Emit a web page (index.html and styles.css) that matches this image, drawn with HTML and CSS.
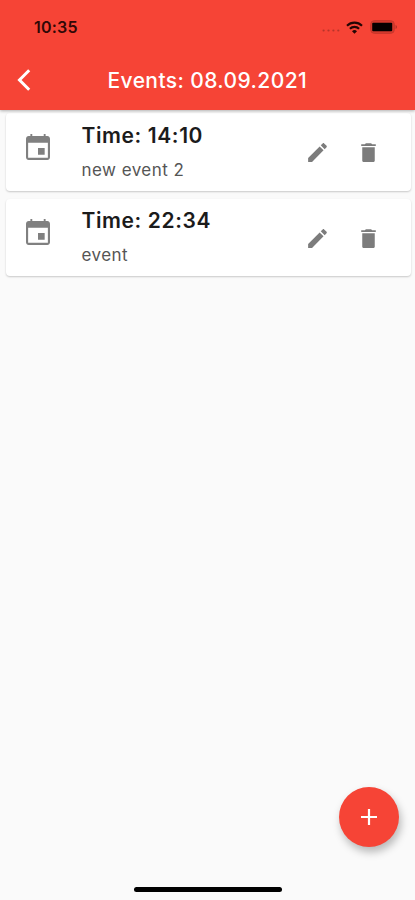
FILE: index.html
```html
<!DOCTYPE html>
<html lang="en">
<head>
<meta charset="utf-8">
<title>Events</title>
<link rel="stylesheet" href="styles.css">
</head>
<body>
<svg width="0" height="0" class="defs">
  <symbol id="calendar" viewBox="0 0 24 24"><path d="M17 12h-5v5h5v-5zM16.300 1.500v1.500H7.700V1.500H6.300V3H5c-1.110 0-1.990.9-1.990 2L3 19c0 1.100.89 2 2 2h14c1.100 0 2-.9 2-2V5c0-1.100-.9-2-2-2h-1.300V1.500h-1.400zM19.400 19.400H4.600V8h14.800v11.400z"/></symbol>
  <symbol id="edit" viewBox="0 0 24 24"><path d="M3 17.250V21h3.750L17.810 9.940l-3.750-3.750L3 17.250zM20.710 7.040c.39-.39.39-1.020 0-1.410l-2.340-2.340c-.39-.39-1.020-.39-1.410 0l-1.830 1.830 3.750 3.750 1.830-1.830z"/></symbol>
  <symbol id="trash" viewBox="0 0 24 24"><path d="M6 20q0 1 1 1h10q1 0 1-1V7H6v13zM19 4h-3.500l-1-1h-5l-1 1H5v1.700h14V4z"/></symbol>
</svg>
<div class="screen">
  <header class="appbar">
    <div class="status">
      <span class="clock">10:35</span>
      <div class="indicators">
        <svg class="dots" width="18" height="3" viewBox="0 0 18 3"><g fill="#b5342a"><circle cx="1.600" cy="1.500" r="1.100"/><circle cx="6.500" cy="1.500" r="1.100"/><circle cx="11.400" cy="1.500" r="1.100"/><circle cx="16.300" cy="1.500" r="1.100"/></g></svg>
        <svg class="wifi" width="17" height="13" viewBox="0 0 17 13"><g fill="none" stroke="#240604" stroke-width="2.100"><path d="M1 4.700a10.700 10.700 0 0 1 15 0"/><path d="M3.900 7.700a6.600 6.600 0 0 1 9.200 0"/></g><path fill="#240604" d="M8.500 12.700 6 10.200a3.600 3.600 0 0 1 5 0z"/></svg>
        <svg class="battery" width="27" height="14" viewBox="0 0 27 14"><rect x=".6" y=".6" width="23.800" height="12.800" rx="4" fill="#d53a2e" stroke="#c8372c"/><rect x="2.200" y="2.800" width="20" height="8.400" rx="1" fill="#050000"/><path d="M25.600 5q1.300 .6 1.300 2t-1.300 2z" fill="#a92d25"/></svg>
      </div>
    </div>
    <div class="toolbar">
      <svg class="back" width="14" height="22" viewBox="0 0 14 22"><path d="M12.200 1.300 2.500 11l9.700 9.700" fill="none" stroke="#fff" stroke-width="3"/></svg>
      <h1>Events: 08.09.2021</h1>
    </div>
  </header>
  <main class="list">
    <article class="card">
      <svg class="calendar"><use href="#calendar"/></svg>
      <div class="text"><h2>Time: 14:10</h2><p>new event 2</p></div>
      <svg class="action"><use href="#edit"/></svg>
      <svg class="action"><use href="#trash"/></svg>
    </article>
    <article class="card">
      <svg class="calendar"><use href="#calendar"/></svg>
      <div class="text"><h2>Time: 22:34</h2><p>event</p></div>
      <svg class="action"><use href="#edit"/></svg>
      <svg class="action"><use href="#trash"/></svg>
    </article>
  </main>
  <button class="fab" aria-label="Add event"><svg width="16" height="16" viewBox="0 0 16 16"><path d="M8 0v16M0 8h16" stroke="#fff" stroke-width="2.200"/></svg></button>
  <div class="home"></div>
</div>
</body>
</html>
```
FILE: styles.css
```css
* { box-sizing: border-box; }
body { margin: 0; background: #fafafa; font-family: Inter, "Liberation Sans", sans-serif; }
h1, h2, p { margin: 0; white-space: nowrap; }
.defs { position: absolute; }
.screen { position: relative; width: 415px; height: 900px; overflow: hidden; background: #fafafa; }
.appbar { position: relative; z-index: 1; height: 109.5px; background: #f64436; box-shadow: 0 1px 3px rgba(0,0,0,.3); }
.status { display: flex; justify-content: space-between; height: 51px; padding: 17px 18px 0 34px; }
.clock { font-size: 16px; line-height: 20px; font-weight: 600; letter-spacing: .2px; color: #300806; }
.indicators { display: flex; height: 20px; align-items: center; }
.dots { margin: 7px 6px 0 0; }
.wifi { margin-right: 7px; }
.toolbar { display: flex; height: 58px; align-items: center; padding-left: 17px; }
.back { flex: none; }
h1 { margin: 2px 0 0 76.5px; font-size: 21px; line-height: 28px; font-weight: 500; letter-spacing: .4px; color: #fff; }
.list { display: flex; flex-direction: column; gap: 8px; padding: 3.5px 4.5px 0 6px; }
.card { display: flex; height: 77.5px; padding-right: 30px; background: #fff; border-radius: 4px; box-shadow: 0 1px 2px rgba(0,0,0,.2); }
.calendar { flex: none; width: 32px; height: 32px; margin: 18.5px 28px 0 15.5px; fill: #808080; }
.text { flex: 1; padding-top: 9.5px; }
h2 { font-size: 21px; line-height: 26px; font-weight: 600; letter-spacing: .6px; color: #1b1b1b; }
p { margin-top: 10px; font-size: 17px; line-height: 22px; letter-spacing: .45px; color: #555; }
.action { flex: none; width: 25px; height: 25px; margin-top: 27px; fill: #7c7c7c; }
.action + .action { margin-left: 26px; }
.fab { position: absolute; left: 338.5px; top: 787px; display: flex; align-items: center; justify-content: center; width: 60px; height: 60px; padding: 0; border: 0; border-radius: 50%; background: #f64436; box-shadow: 2px 5px 8px rgba(0,0,0,.27); }
.home { position: absolute; left: 134px; top: 886.5px; width: 148px; height: 5px; border-radius: 3px; background: #000; }
```
